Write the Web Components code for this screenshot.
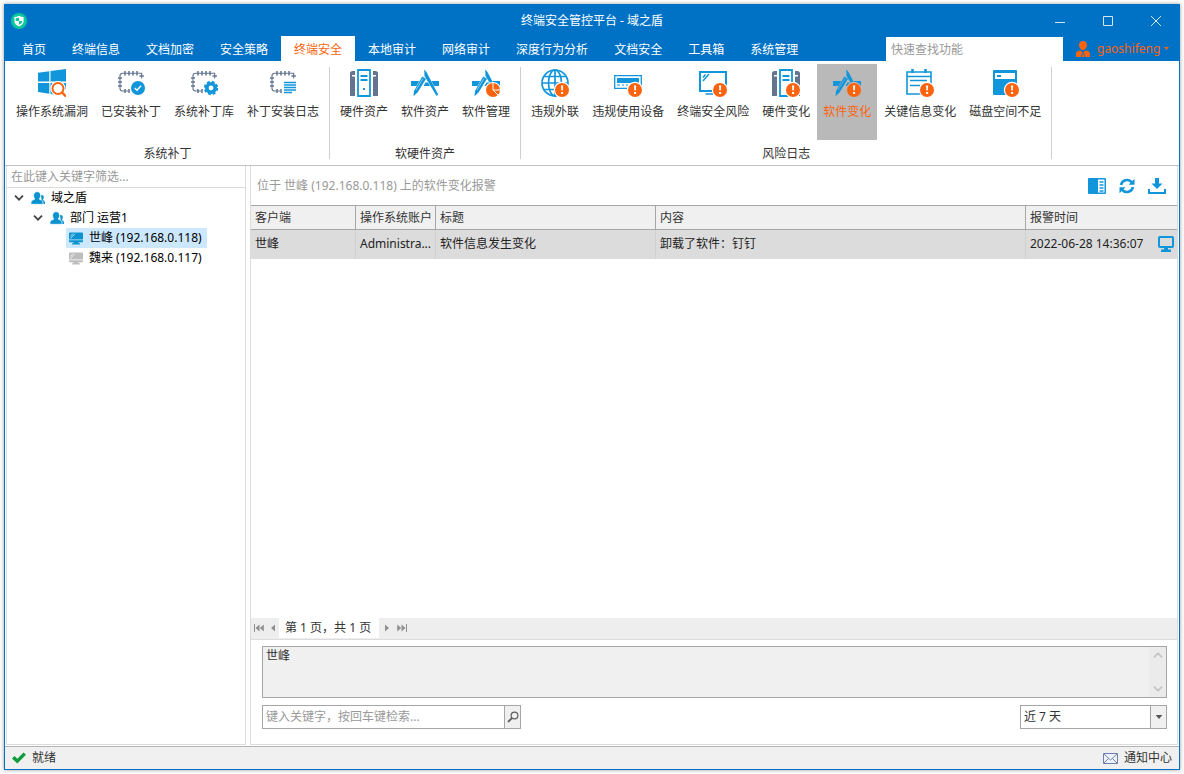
<!DOCTYPE html>
<html lang="zh-CN">
<head>
<meta charset="utf-8">
<title>终端安全管控平台 - 域之盾</title>
<style>
  html, body { margin: 0; background: #fff; }
  body {
    font: 12px/20px "Noto Sans", "Noto Sans CJK SC", sans-serif;
    color: #333;
    --blue: #0072c6;
    --icon: #1296db;
    --accent: #fa640f;
    --line: #a6a6a6;
    --soft: #dcdcdc;
  }
</style>
</head>
<body>
<app-window>
  <title-bar slot="title">终端安全管控平台 - 域之盾</title-bar>
  <menu-bar slot="menu" user="gaoshifeng">
    <menu-tab>首页</menu-tab>
    <menu-tab>终端信息</menu-tab>
    <menu-tab>文档加密</menu-tab>
    <menu-tab>安全策略</menu-tab>
    <menu-tab selected>终端安全</menu-tab>
    <menu-tab>本地审计</menu-tab>
    <menu-tab>网络审计</menu-tab>
    <menu-tab>深度行为分析</menu-tab>
    <menu-tab>文档安全</menu-tab>
    <menu-tab>工具箱</menu-tab>
    <menu-tab>系统管理</menu-tab>
  </menu-bar>
  <tool-ribbon slot="ribbon">
    <ribbon-group label="系统补丁">
      <ribbon-button icon="osScan">操作系统漏洞</ribbon-button>
      <ribbon-button icon="patchOk">已安装补丁</ribbon-button>
      <ribbon-button icon="patchGear">系统补丁库</ribbon-button>
      <ribbon-button icon="patchLog">补丁安装日志</ribbon-button>
    </ribbon-group>
    <ribbon-group label="软硬件资产">
      <ribbon-button icon="hardware">硬件资产</ribbon-button>
      <ribbon-button icon="software">软件资产</ribbon-button>
      <ribbon-button icon="softManage">软件管理</ribbon-button>
    </ribbon-group>
    <ribbon-group label="风险日志">
      <ribbon-button icon="globeAlert">违规外联</ribbon-button>
      <ribbon-button icon="deviceAlert">违规使用设备</ribbon-button>
      <ribbon-button icon="screenAlert">终端安全风险</ribbon-button>
      <ribbon-button icon="hardwareAlert">硬件变化</ribbon-button>
      <ribbon-button icon="softwareAlert" selected>软件变化</ribbon-button>
      <ribbon-button icon="calendarAlert">关键信息变化</ribbon-button>
      <ribbon-button icon="diskAlert">磁盘空间不足</ribbon-button>
    </ribbon-group>
  </tool-ribbon>
  <tree-panel slot="side">
    <tree-node icon="users" open>域之盾
      <tree-node slot="children" icon="users" open>部门 运营1
        <tree-node slot="children" icon="pc" selected>世峰 (192.168.0.118)</tree-node>
        <tree-node slot="children" icon="pcOff">魏来 (192.168.0.117)</tree-node>
      </tree-node>
    </tree-node>
  </tree-panel>
  <alarm-panel slot="main">
    <span slot="heading">位于 世峰 (192.168.0.118) 上的软件变化报警</span>
    <alarm-table slot="table"></alarm-table>
    <page-bar slot="pager">第 1 页，共 1 页</page-bar>
    <filter-form slot="filter"></filter-form>
  </alarm-panel>
  <status-bar slot="status">就绪<span slot="end">通知中心</span></status-bar>
</app-window>

<script>
const B = '#1296db', S = '#64748f', O = '#fa640f';
const badge = `<circle cx="21" cy="21" r="8.2" fill="var(--bg,#fff)"/><circle cx="21" cy="21" r="7" fill="${O}"/><path d="M20 16.5h2.2l-.4 5h-1.4zM20.1 23h2v2h-2z" fill="#fff"/>`;
const chip = `<g fill="none" stroke="${S}"><path stroke-width="1.1" d="M11.5 22H5.5Q3 22 3 19.5V7Q3 4.3 5.5 4.3H24.7V9.5"/><path stroke-width="1.5" d="M8 2v4.6M12 2v4.6M16 2v4.6M20 2v4.6M1 9h4M1 13h4M1 17h4M22.5 7h4.4M8 20v4M12 20v4"/></g>`;
const rack = `<path d="M0 4.5Q0 2 2.5 2H5V6H2V7.5H5V27H0zM28 4.5Q28 2 25.5 2H23V6H26V7.5H23V27H28z" fill="${S}"/><path d="M8 1H20V27H8zM10.5 7H17.5M10.5 11H17.5" fill="none" stroke="${B}" stroke-width="1.8"/><path d="M13 19h2v2h-2z" fill="${B}"/>`;
const tools = `<path d="M0 12H8.2L5.5 17H0zM14.5 13.5H17L19 17H12.5zM20.5 12H28V17H23z" fill="${B}"/><path d="M11.2 7.5L15 9.800 6.500 23.500 2.500 27.200 3 22z" fill="${B}"/><path d="M13.200 .5L15.500 3 27.200 25.500 25.600 27 13.500 7z" fill="${B}"/><path d="M5 21l7-11.500" stroke="var(--bg,#fff)" stroke-width=".5"/>`;
const people = `<path d="M10 4C12 3.5 13 5 12.8 6.8 12.6 8 12 8.5 12 9 13 9.6 14 10 14 12V13H11z" fill="#0a93cf"/><path d="M5.500 .8C8 .3 9.600 2 9.600 4.200 9.600 6 9 7.200 8.200 8 10 9 12 9.300 12 11.500V13.300H0V11.500C0 9.300 2.500 9 3.900 8 3 7.200 2.600 6 2.600 4.200 2.600 2.500 3.700 1.100 5.500 .8z" fill="#0a93cf" stroke="#fff" stroke-width=".7"/>`;
const pc = c => `<path d="M1 1.5H13Q14 1.5 14 2.5V8.5H0V2.5Q0 1.5 1 1.5z" fill="${c}"/><path d="M0 9.3H14V10.5Q14 11.3 13 11.3H9.5V12.3H11V13.5H3V12.3H4.5V11.3H1Q0 11.3 0 10.5z" fill="${c}"/><path d="M1.3 5.5L4 2.5M1.5 7.5L5.8 2.8" stroke="#fff" stroke-width=".7"/>`;

const ICONS = {
  osScan: [28, 28, `<path d="M0 3.8L11.3 2.2V12.5H0zM12.5 2L28 0V12.5H12.5zM0 14H11.3V24.7L0 23zM12.5 14H28V27L12.5 25z" fill="${B}"/><circle cx="20" cy="19.5" r="7.6" fill="#fff"/><path d="M22 22V28H28V20z" fill="#fff"/><circle cx="20" cy="19.5" r="5.5" fill="#fff" stroke="${O}" stroke-width="2"/><path d="M24 23.5L28 27.5" stroke="${O}" stroke-width="2.4"/>`],
  patchOk: [28, 28, chip + `<circle cx="21" cy="19" r="7" fill="${B}"/><path d="M17.7 19l2.3 2.3 4-4.5" fill="none" stroke="#fff" stroke-width="1.4"/>`],
  patchGear: [28, 28, chip + `<circle cx="21" cy="19" r="4.2" fill="none" stroke="${B}" stroke-width="3.6"/><circle cx="21" cy="19" r="6.2" fill="none" stroke="${B}" stroke-width="2" stroke-dasharray="2.8 2.07"/>`],
  patchLog: [28, 28, chip + `<path d="M15 13.5h12M15 16h12M15 18.5h12M15 21h12M15 23.5h8" stroke="${B}" stroke-width="1.5"/>`],
  hardware: [28, 28, rack],
  software: [28, 28, tools],
  softManage: [28, 28, tools + `<circle cx="21" cy="21" r="8" fill="#fff"/><circle cx="21" cy="21" r="7" fill="${O}"/><path d="M21 13.5V21h7.5M21 21l5 5" fill="none" stroke="#fff" stroke-width="1"/>`],
  globeAlert: [28, 28, `<g fill="none" stroke="${B}" stroke-width="1.7"><circle cx="14" cy="14" r="13"/><ellipse cx="14" cy="14" rx="6.5" ry="13"/><path d="M14 1V27M1 14H27M3 7.5H25M3 20.5H25"/></g>` + badge],
  deviceAlert: [28, 28, `<path d="M.7 6.7H27.3V19.3H.7z" fill="none" stroke="${B}" stroke-width="1.3"/><path d="M3 9H25V14H3zM3 15.5h3v1H3zM8 15.5h2v1H8zM12 15.5h2v1h-2z" fill="${B}"/>` + badge],
  screenAlert: [28, 28, `<path d="M1 3H27V22H1z" fill="none" stroke="${B}" stroke-width="2"/><path d="M4 12l6-7M4 8.500l2.500-3M6.500 25H14" stroke="${B}" stroke-width="1.5"/>` + badge],
  hardwareAlert: [28, 28, rack + badge],
  softwareAlert: [28, 28, tools + badge],
  calendarAlert: [28, 28, `<path d="M1 3H25V25H1zM1 7.5H25M4 11.5H21M4 16.5H14" fill="none" stroke="${B}" stroke-width="1.6"/><path d="M6.5 0V4M19.5 0V4" stroke="${B}" stroke-width="2.5"/>` + badge],
  diskAlert: [28, 28, `<path d="M3 1H25Q26 1 26 2V26H3Q2 26 2 25V2Q2 1 3 1z" fill="${B}"/><path d="M4 4H24V10H4z" fill="#fff"/><path d="M6 6h4v2H6z" fill="${B}"/>` + badge],
  shield: [16, 16, `<circle cx="8" cy="8" r="8" fill="#0bc79b"/><path d="M8 2.8C9.5 3.6 11 4 12.600 4V8C12.600 10.800 10.500 12.500 8 13.400 5.500 12.500 3.400 10.800 3.400 8V4C5 4 6.500 3.600 8 2.800z" fill="#fff"/><path d="M8 4.600V8H4.700V5.200Q6.500 5.200 8 4.600zM8 8h3.300Q11.300 10.500 8 11.800z" fill="#0bc79b"/>`],
  minimize: [10, 10, `<path d="M0 6.500H10" stroke="#d5e6f5"/>`],
  maximize: [10, 10, `<path d="M.5 .5H9.500V9.500H.5z" fill="none" stroke="#d5e6f5"/>`],
  close: [10, 10, `<path d="M0 0L10 10M10 0L0 10" stroke="#d5e6f5"/>`],
  user: [14, 16, `<path d="M7 0C9.500 0 11 1.800 11 4S9.500 9 7 9 3 6.200 3 4 4.500 0 7 0zM0 16V12.500C0 10.500 2.500 9.800 4.300 9.500L7 11.500 9.700 9.500C11.500 9.800 14 10.500 14 12.500V16z" fill="${O}"/><path d="M6.500 11.500L5.300 16M7.500 11.500L8.700 16" stroke="#0072c6" stroke-width=".8"/>`],
  caret: [5, 3, `<path d="M0 0H5L2.500 3z" fill="currentColor"/>`],
  chevron: [10, 6, `<path d="M1 .7L5 4.700 9 .7" fill="none" stroke="currentColor" stroke-width="1.8"/>`],
  chevronUp: [10, 6, `<path d="M1 5.300L5 1.300 9 5.300" fill="none" stroke="currentColor" stroke-width="1.8"/>`],
  users: [14, 14, people],
  pc: [14, 14, pc('#0a93cf')],
  pcOff: [14, 14, pc('#bdbdbd')],
  columns: [18, 16, `<path d="M1 0H17Q18 0 18 1V15Q18 16 17 16H1Q0 16 0 15V1Q0 0 1 0z" fill="${B}"/><path d="M10 1.500H16.500V14.500H10z" fill="#fff"/><path d="M11.500 4h4M11.500 7h4M11.500 10h4M11.500 13h4" stroke="${B}" stroke-width="1.3"/>`],
  refresh: [16, 16, `<path d="M2 7A6.200 6.200 0 0 1 12.800 4.200M14 9A6.200 6.200 0 0 1 3.200 11.800" fill="none" stroke="${B}" stroke-width="2.6"/><path d="M15.500 .8V6.800H9.500zM.5 15.200V9.200H6.500z" fill="${B}"/>`],
  download: [18, 16, `<path d="M7 0h4v5.500h3.500L9 11 3.500 5.500H7z" fill="${B}"/><path d="M1 11V15H17V11" fill="none" stroke="${B}" stroke-width="2"/>`],
  remote: [16, 16, `<path d="M2 1H14Q15 1 15 2V10Q15 11 14 11H2Q1 11 1 10V2Q1 1 2 1z" fill="none" stroke="${B}" stroke-width="2"/><path d="M6 11h4v2.500H13V16H3V13.500h3z" fill="${B}"/>`],
  first: [10, 8, `<path d="M0 0h1v8H0zM5.500 .5v7L1.500 4zM9.800 .5v7L5.800 4z" fill="#909090"/>`],
  prev: [4, 8, `<path d="M4 .5v7L0 4z" fill="#909090"/>`],
  next: [4, 8, `<path d="M0 .5v7L4 4z" fill="#909090"/>`],
  last: [10, 8, `<path d="M9 0h1v8H9zM4.500 .5v7L8.500 4zM.2 .5v7L4.200 4z" fill="#909090"/>`],
  search: [12, 12, `<circle cx="7.500" cy="4.500" r="3.400" fill="none" stroke="#606060" stroke-width="1.2"/><path d="M5 7L1 11" stroke="#606060" stroke-width="1.8"/>`],
  check: [14, 12, `<path d="M0 6.500L2.500 4 5.300 6.800 11.500 .5 14 2.800 5.300 11.500z" fill="#0f9d3c"/>`],
  mail: [15, 11, `<path d="M.5 .5H14.500V10.500H.5z" fill="#eef3fb" stroke="#6c7fb0"/><path d="M1 1L7.500 7 14 1M1 10L5.500 5.500M14 10L9.500 5.500" fill="none" stroke="#6c7fb0"/>`]
};
const icon = name => {
  const [w, h, body] = ICONS[name];
  return `<svg width="${w}" height="${h}" viewBox="0 0 ${w} ${h}" aria-hidden="true">${body}</svg>`;
};

const BASE = `*{box-sizing:border-box} svg{display:block;flex:none}
button,input,textarea,select{font:inherit;color:inherit;margin:0;border:0;padding:0;background:none;border-radius:0;outline:0;appearance:none}`;
const define = (tag, css, html) => customElements.define(tag, class extends HTMLElement {
  connectedCallback() {
    if (this.shadowRoot) return;
    const root = this.attachShadow({ mode: 'open' });
    root.innerHTML = `<style>${BASE}${css}</style>${typeof html === 'function' ? html(this) : html}`;
  }
});

define('app-window', `
  :host{display:flex;flex-direction:column;box-sizing:border-box;margin:4px;min-height:calc(100vh - 8px);border:1px solid var(--blue);background:#fff;box-shadow:0 0 4px rgba(0,0,0,.4)}
  .body{flex:1;display:grid;grid-template-columns:240px minmax(0,1fr);gap:4px;padding:0 1px 1px}
  ::slotted([slot=side]),::slotted([slot=main]){min-width:0}`,
  `<slot name="title"></slot><slot name="menu"></slot><slot name="ribbon"></slot>
   <div class="body"><slot name="side"></slot><slot name="main"></slot></div><slot name="status"></slot>`);

define('title-bar', `
  :host{display:grid;grid-template-columns:1fr auto 1fr;align-items:center;height:31px;background:var(--blue);color:#fff}
  .logo{padding-left:6px}
  .controls{display:flex;justify-content:flex-end;gap:2px}
  button{width:46px;height:30px;display:grid;place-items:center}`,
  `<span class="logo">${icon('shield')}</span><span><slot></slot></span>
   <div class="controls"><button aria-label="最小化">${icon('minimize')}</button><button aria-label="最大化">${icon('maximize')}</button><button aria-label="关闭">${icon('close')}</button></div>`);

define('menu-bar', `
  :host{display:flex;height:25px;background:var(--blue);color:#fff}
  nav{display:flex;flex:1;padding-left:4px}
  input{width:177px;height:24px;margin-top:1px;padding:0 5px;background:#fff;color:#333}
  input::placeholder{color:#999;opacity:1}
  .user{width:116px;display:flex;align-items:center;padding-left:13px;color:var(--accent)}
  .user span{margin:0 4px 0 7px}`,
  el => `<nav role="tablist"><slot></slot></nav><input type="search" aria-label="快速查找功能" placeholder="快速查找功能">
   <button class="user">${icon('user')}<span>${el.getAttribute('user')}</span>${icon('caret')}</button>`);

define('menu-tab', `
  :host{display:block}
  button{height:25px;padding:2px 13px 0;white-space:nowrap}
  :host([selected]) button{background:#fff;color:var(--accent)}`,
  el => `<button role="tab" aria-selected="${el.hasAttribute('selected')}"><slot></slot></button>`);

define('tool-ribbon', `
  :host{display:flex;height:105px;padding-left:1px;border-bottom:1px solid #c3c3c3;box-sizing:border-box;background:#fff}`, `<slot></slot>`);

define('ribbon-group', `
  :host{display:flex;flex-direction:column;justify-content:space-between;position:relative;padding:3px 5px 1px 4px}
  :host::after{content:"";position:absolute;right:0;top:6px;bottom:6px;width:1px;background:#cfcfcf}
  .row{display:flex;gap:1px}
  .label{text-align:center}`,
  el => `<div class="row" role="group" aria-label="${el.getAttribute('label')}"><slot></slot></div><div class="label">${el.getAttribute('label')}</div>`);

define('ribbon-button', `
  :host{display:block}
  button{display:flex;flex-direction:column;align-items:center;gap:5px;height:76px;padding:5px 6px 0;white-space:nowrap}
  :host([selected]) button{background:#b9b9b9;color:var(--accent);--bg:#b9b9b9}`,
  el => `<button>${icon(el.getAttribute('icon'))}<span><slot></slot></span></button>`);

define('tree-panel', `
  :host{display:block;border:1px solid var(--soft);border-top:0;color:#000}
  input{display:block;width:100%;height:22px;padding:0 4px;border-bottom:1px solid var(--soft)}
  input::placeholder{color:#999;opacity:1}
  [role=tree]{padding-left:2px}`,
  `<input type="text" aria-label="筛选" placeholder="在此键入关键字筛选..."><div role="tree"><slot></slot></div>`);

define('tree-node', `
  :host{display:block}
  .row{display:flex;height:20px;align-items:center}
  .toggle{width:19px;height:20px;display:grid;place-items:center;color:#444}
  .label{display:flex;align-items:center;gap:6px;height:20px;padding:0 5px 0 3px;white-space:nowrap}
  :host([selected]) .label{background:#cce8ff}
  .kids{padding-left:19px}`,
  el => `<div class="row" role="treeitem"><button class="toggle" aria-label="展开">${el.hasAttribute('open') ? icon('chevron') : ''}</button><div class="label">${icon(el.getAttribute('icon'))}<span><slot></slot></span></div></div>
   <div class="kids" role="group"><slot name="children"></slot></div>`);

define('alarm-panel', `
  :host{display:flex;flex-direction:column;border:1px solid var(--soft);border-top:0}
  header{display:flex;align-items:center;justify-content:space-between;height:39px;padding:0 11px 0 6px;color:#999}
  .tools{display:flex;gap:12px;align-items:center}
  button{width:18px;height:18px;display:grid;place-items:center}
  .table{flex:1}`,
  `<header><slot name="heading"></slot><div class="tools"><button aria-label="显示列">${icon('columns')}</button><button aria-label="刷新">${icon('refresh')}</button><button aria-label="导出">${icon('download')}</button></div></header>
   <div class="table"><slot name="table"></slot></div><slot name="pager"></slot><slot name="filter"></slot>`);

define('alarm-table', `
  :host{display:block}
  table{width:100%;border-collapse:separate;border-spacing:0;table-layout:fixed}
  .c1{width:105px}.c2{width:80px}.c3{width:220px}.c5{width:151px}
  th,td{text-align:left;font-weight:400;padding:0 3px 0 4px;white-space:nowrap;overflow:hidden;border-right:1px solid #d0d0d0}
  th{height:25px;background:#f0f0f0;border-top:1px solid var(--line);border-bottom:1px solid var(--line);border-right-color:var(--line)}
  th:last-child,td:last-child{border-right:0}
  th:nth-child(2){padding-right:0}
  td{height:29px;padding-bottom:1px;background:#dcdcdc;color:#222}
  .time{display:flex;align-items:center;justify-content:space-between}`,
  `<table><colgroup><col class="c1"><col class="c2"><col class="c3"><col><col class="c5"></colgroup>
   <thead><tr><th>客户端</th><th>操作系统账户</th><th>标题</th><th>内容</th><th>报警时间</th></tr></thead>
   <tbody><tr><td>世峰</td><td>Administra...</td><td>软件信息发生变化</td><td>卸载了软件：钉钉</td>
   <td><div class="time"><span>2022-06-28 14:36:07</span><button aria-label="查看终端">${icon('remote')}</button></div></td></tr></tbody></table>`);

define('page-bar', `
  :host{display:flex;height:22px;background:#eee;border-bottom:1px solid var(--soft);box-sizing:border-box}
  .side{display:flex;align-items:center;gap:7px;height:20px;padding:0 4px 0 3px}
  .side + span + .side{padding-left:6px;gap:8px}
  span{height:20px;background:#fff;padding:0 8px 0 6px}`,
  `<div class="side"><button aria-label="首页">${icon('first')}</button><button aria-label="上一页">${icon('prev')}</button></div><span><slot></slot></span>
   <div class="side"><button aria-label="下一页">${icon('next')}</button><button aria-label="末页">${icon('last')}</button></div>`);

define('filter-form', `
  :host{display:flex;flex-direction:column;gap:7px;padding:6px 10px 15px 11px}
  .memo{display:flex;height:52px;border:1px solid var(--line);background:#f0f0f0}
  textarea{flex:1;resize:none;overflow:hidden;padding:0 3px;line-height:18px}
  .scroll{width:17px;display:flex;flex-direction:column;justify-content:space-between;align-items:center;padding:5px 0;background:#ebebeb;color:#c4c4c4}
  .row{display:flex;justify-content:space-between}
  .box{display:flex;height:24px;border:1px solid var(--line);background:#fff}
  .search{width:259px}
  input{flex:1;min-width:0;padding:0 3px}
  input::placeholder{color:#999;opacity:1}
  .box button,.arrow{width:16px;display:grid;place-items:center;background:#f0f0f0;border-left:1px solid var(--line);color:#555}
  .range{width:147px;position:relative}
  select{width:100%;padding:0 20px 0 3px}
  .arrow{position:absolute;right:0;top:0;bottom:0;pointer-events:none}
  .arrow svg{width:8px;height:4px}`,
  `<div class="memo"><textarea readonly aria-label="已选终端">世峰</textarea><div class="scroll">${icon('chevronUp')}${icon('chevron')}</div></div>
   <div class="row"><div class="box search"><input type="text" aria-label="关键字" placeholder="键入关键字，按回车键检索..."><button aria-label="检索">${icon('search')}</button></div>
   <div class="box range"><select aria-label="时间范围"><option>近 7 天</option></select><div class="arrow">${icon('caret')}</div></div></div>`);

define('status-bar', `
  :host{display:flex;justify-content:space-between;align-items:center;height:23px;box-sizing:border-box;padding:0 7px;border-top:1px solid #b4b4b4;background:#f0f0f0}
  div{display:flex;align-items:center;gap:6px}`,
  `<div>${icon('check')}<span><slot></slot></span></div><div>${icon('mail')}<slot name="end"></slot></div>`);
</script>
</body>
</html>
